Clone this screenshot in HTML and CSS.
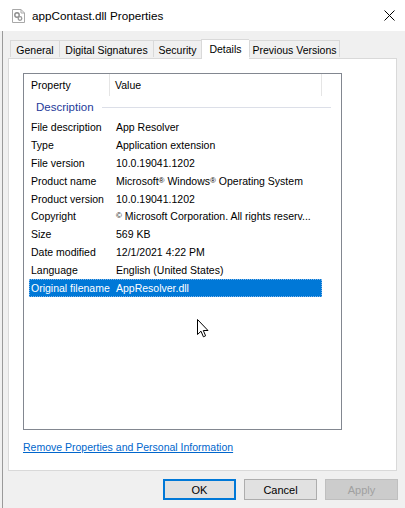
FILE: index.html
```html
<!DOCTYPE html>
<html>
<head>
<meta charset="utf-8">
<link rel="stylesheet" href="styles.css">
</head>
<body>
<div class="titlebar">
  <svg class="ticon" width="13" height="14" viewBox="0 0 13 14">
    <path d="M0.5 0.5 H9 L12.5 4 V13.5 H0.5 Z" fill="#fff" stroke="#a8a8a8"/>
    <path d="M9 0.5 V4 H12.5" fill="none" stroke="#a8a8a8"/>
    <circle cx="5" cy="6" r="2.2" fill="none" stroke="#8c8c8c" stroke-width="1.4"/>
    <circle cx="8" cy="9.5" r="1.8" fill="none" stroke="#9a9a9a" stroke-width="1.3"/>
  </svg>
  <span class="ttext">appContast.dll Properties</span>
  <svg class="close" width="11" height="11" viewBox="0 0 11 11">
    <path d="M0.5 0.5 L10.5 10.5 M10.5 0.5 L0.5 10.5" stroke="#000" stroke-width="1"/>
  </svg>
</div>
<div class="frame">
  <div class="tabs">
    <div class="tab w-gen">General</div>
    <div class="tab w-dig">Digital Signatures</div>
    <div class="tab w-sec">Security</div>
    <div class="tab sel w-det">Details</div>
    <div class="tab w-prev">Previous Versions</div>
  </div>
  <div class="panel">
    <div class="list">
      <div class="header">
        <div class="hcol h1">Property</div>
        <div class="hcol h2">Value</div>
        <div class="hrest"></div>
      </div>
      <div class="group"><span class="gtext">Description</span><span class="gline"></span></div>
      <div class="row"><span class="k">File description</span><span class="v">App Resolver</span></div>
      <div class="row"><span class="k">Type</span><span class="v">Application extension</span></div>
      <div class="row"><span class="k">File version</span><span class="v">10.0.19041.1202</span></div>
      <div class="row"><span class="k">Product name</span><span class="v">Microsoft<span class="sup">®</span> Windows<span class="sup">®</span> Operating System</span></div>
      <div class="row"><span class="k">Product version</span><span class="v">10.0.19041.1202</span></div>
      <div class="row"><span class="k">Copyright</span><span class="v"><span class="sup">©</span> Microsoft Corporation. All rights reserv...</span></div>
      <div class="row"><span class="k">Size</span><span class="v">569 KB</span></div>
      <div class="row"><span class="k">Date modified</span><span class="v">12/1/2021 4:22 PM</span></div>
      <div class="row"><span class="k">Language</span><span class="v">English (United States)</span></div>
      <div class="row selected"><span class="k">Original filename</span><span class="v">AppResolver.dll</span></div>
      <svg class="cursor" width="13" height="20" viewBox="0 0 13 20">
        <path d="M0.5 0.5 L0.5 15.5 L4 12.2 L6.4 17.8 L8.6 16.8 L6.3 11.5 L11 11.5 Z" fill="#fff" stroke="#000" stroke-width="1" stroke-linejoin="miter"/>
      </svg>
    </div>
    <a class="link" href="#">Remove Properties and Personal Information</a>
  </div>
  <div class="buttons">
    <div class="btn ok">OK</div>
    <div class="btn">Cancel</div>
    <div class="btn dis">Apply</div>
  </div>
</div>
</body>
</html>
```
FILE: styles.css
```css
html, body {
  margin: 0;
  padding: 0;
}
body {
  width: 405px;
  height: 508px;
  overflow: hidden;
  background: #f0f0f0;
  font-family: "Liberation Sans", Arial, sans-serif;
  font-size: 10.5px;
  color: #000;
}
.titlebar {
  height: 31px;
  background: #fff;
  display: flex;
  align-items: center;
  padding-left: 12px;
  box-sizing: border-box;
}
.ticon {
  margin-right: 7px;
  margin-top: 1px;
}
.ttext {
  font-size: 11.7px;
  flex: 1;
}
.close {
  margin-right: 10px;
  margin-top: 0px;
}
.frame {
  height: 477px;
  margin-left: 2px;
  border-left: 1px solid #9a9a9a;
  background: #f0f0f0;
  box-sizing: border-box;
  padding-left: 5px;
}
.tabs {
  display: flex;
  align-items: flex-end;
  height: 27px;
  padding-left: 2px;
  position: relative;
  z-index: 2;
}
.tab {
  height: 17px;
  box-sizing: border-box;
  border: 1px solid #d9d9d9;
  border-bottom: none;
  border-right: none;
  background: #f0f0f0;
  display: flex;
  align-items: center;
  justify-content: center;
  padding-top: 2px;
  margin-bottom: 1px;
}
.tab.w-prev {
  border-right: 1px solid #d9d9d9;
}
.tab.sel {
  height: 20px;
  background: #fff;
  margin-bottom: -1px;
  padding-top: 0;
  padding-bottom: 2px;
  border-right: none;
}
.w-gen { width: 49px; }
.w-dig { width: 94px; }
.w-sec { width: 48px; }
.w-det { width: 48px; }
.w-prev { width: 91px; }
.panel {
  width: 389px;
  height: 413px;
  box-sizing: border-box;
  border: 1px solid #d9d9d9;
  background: #fff;
  padding: 14px 0 0 14px;
  position: relative;
  z-index: 1;
}
.list {
  width: 319px;
  height: 357px;
  box-sizing: border-box;
  border: 1px solid #828790;
  position: relative;
}
.header {
  display: flex;
  height: 22px;
}
.hcol {
  display: flex;
  align-items: center;
  box-sizing: border-box;
  border-right: 1px solid #e5e5e5;
}
.h1 {
  width: 86px;
  padding-left: 7px;
}
.h2 {
  width: 212px;
  padding-left: 5px;
}
.group {
  height: 22px;
  display: flex;
  align-items: center;
  padding-left: 12px;
}
.gtext {
  color: #1e3a9a;
  font-size: 11.5px;
}
.gline {
  flex: none;
  width: 229px;
  height: 1px;
  background: #dcdfe8;
  margin-left: 8px;
  margin-top: 1px;
}
.row {
  display: flex;
  height: 17.9px;
  align-items: center;
  margin-left: 5px;
  width: 293px;
  box-sizing: border-box;
}
.k {
  width: 87px;
  padding-left: 2px;
  box-sizing: border-box;
  flex: none;
  white-space: nowrap;
}
.v {
  white-space: nowrap;
}
.sup {
  font-size: 8px;
  position: relative;
  top: -2px;
}
.row.selected {
  background: #0078d7;
  color: #fff;
  outline: 1px dotted #7fb4e8;
  outline-offset: -1px;
}
.cursor {
  position: absolute;
  left: 173px;
  top: 245px;
}
.link {
  display: block;
  margin-top: 11px;
  color: #0066cc;
  text-decoration: underline;
  font-size: 10.5px;
}
.buttons {
  display: flex;
  justify-content: flex-end;
  gap: 8px;
  margin-top: 8px;
  width: 390px;
}
.btn {
  width: 73px;
  height: 21px;
  box-sizing: border-box;
  border: 1px solid #adadad;
  background: #e1e1e1;
  display: flex;
  align-items: center;
  justify-content: center;
  font-size: 11px;
}
.btn.ok {
  border: 2px solid #0078d7;
}
.btn.dis {
  background: #cccccc;
  border-color: #bfbfbf;
  color: #a0a0a0;
}
```
